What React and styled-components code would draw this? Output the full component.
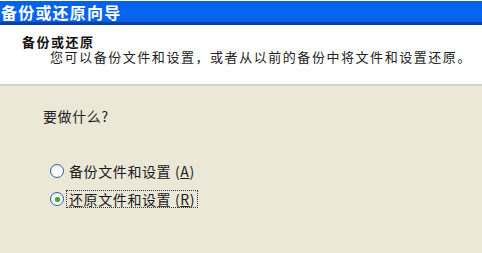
import styled, { createGlobalStyle } from 'styled-components';

const Global = createGlobalStyle`
  body {
    margin: 0;
    background: #fff;
    font-family: "Noto Sans CJK SC", "DejaVu Sans", sans-serif;
  }
`;

const Wizard = styled.div`
  width: 482px;
  height: 253px;
  display: flex;
  flex-direction: column;
  overflow: hidden;
`;

const TitleBar = styled.div`
  height: 21px;
  margin-top: 1px;
  display: flex;
  align-items: center;
  padding-left: 1px;
  background: linear-gradient(#0a5fe8, #0566f2 60%, #0b5fe6);
  border-bottom: 3px solid #0b3fa8;
  color: #fff;
  font-size: 16px;
  font-weight: 700;
  letter-spacing: 1.2px;
  line-height: 1;
`;

const Header = styled.div`
  height: 61px;
  background: #fff;
  padding: 10px 0 0 22px;
  box-sizing: border-box;
  border-bottom: 2px solid #d6d3c6;
  box-shadow: 0 1px 0 #f4f2ea;
`;

const HeaderTitle = styled.div`
  font-size: 13px;
  font-weight: 700;
  color: #111;
  line-height: 14px;
  letter-spacing: 1.5px;
`;

const HeaderText = styled.div`
  font-size: 13px;
  color: #222;
  line-height: 15px;
  padding-left: 28px;
  letter-spacing: 1.55px;
  white-space: nowrap;
`;

const Body = styled.div`
  flex: 1;
  background: #ebe8d8;
  padding: 21px 0 0 43px;
  display: flex;
  flex-direction: column;
`;

const Question = styled.div`
  font-size: 14px;
  letter-spacing: 0.6px;
  color: #222;
  line-height: 18px;
  margin-bottom: 37px;
`;

const Options = styled.div`
  display: flex;
  flex-direction: column;
  gap: 10px;
  padding-left: 7px;
`;

const Option = styled.label`
  display: flex;
  align-items: center;
  gap: 3px;
  height: 18px;
  font-size: 14px;
  color: #1a1a1a;
`;

const Circle = styled.span`
  width: 12px;
  height: 12px;
  border-radius: 50%;
  border: 1px solid #2f5fa0;
  background: radial-gradient(circle at 60% 65%, #fff 40%, #dcdcd4);
  display: flex;
  align-items: center;
  justify-content: center;
  flex-shrink: 0;

  &::after {
    content: '';
    width: 5px;
    height: 5px;
    border-radius: 50%;
    background: ${(p) => (p.$checked ? '#3fa83a' : 'transparent')};
    box-shadow: ${(p) => (p.$checked ? '0 0 1px #8fd48a' : 'none')};
  }
`;

const Caption = styled.span`
  padding: 0 2px;
  letter-spacing: 0.6px;
  outline: ${(p) => (p.$focused ? '1px dotted #333' : 'none')};
  line-height: 16px;

  u {
    text-decoration: underline;
  }
`;

const App = () => {
  const options = [
    { text: '备份文件和设置', key: 'A', checked: false },
    { text: '还原文件和设置', key: 'R', checked: true },
  ];

  return (
    <Wizard>
      <Global />
      <TitleBar>备份或还原向导</TitleBar>
      <Header>
        <HeaderTitle>备份或还原</HeaderTitle>
        <HeaderText>
          您可以备份文件和设置，或者从以前的备份中将文件和设置还原。
        </HeaderText>
      </Header>
      <Body>
        <Question>要做什么?</Question>
        <Options>
          {options.map((o) => (
            <Option key={o.key}>
              <Circle $checked={o.checked} />
              <Caption $focused={o.checked}>
                {o.text} (<u>{o.key}</u>)
              </Caption>
            </Option>
          ))}
        </Options>
      </Body>
    </Wizard>
  );
};

export default App;
